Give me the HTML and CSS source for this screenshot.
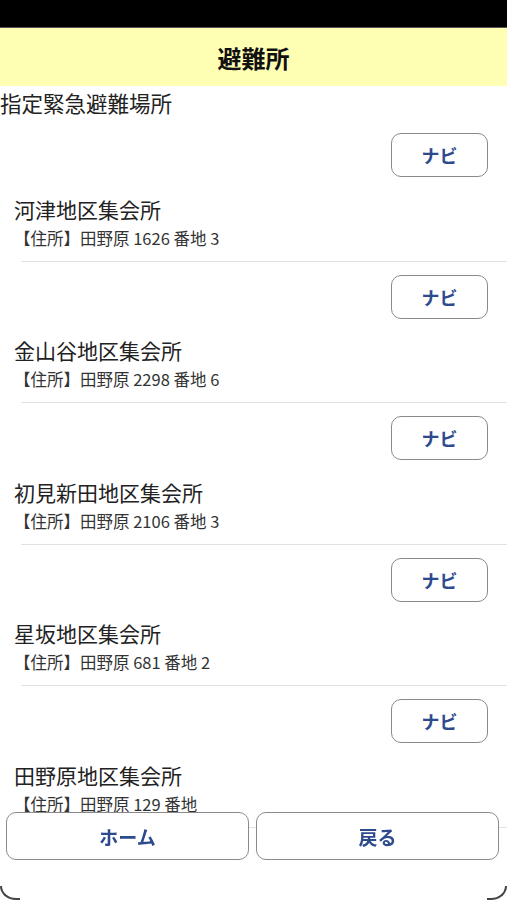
FILE: index.html
```html
<!DOCTYPE html>
<html lang="ja">
<head>
  <meta charset="UTF-8">
  <meta name="viewport" content="width=device-width, initial-scale=1.0">
  <title>避難所</title>
  <link rel="stylesheet" href="styles.css">
</head>
<body>
  <div class="status-bar"></div>

  <!-- Page title -->
  <header class="title-bar">
    <h1>避難所</h1>
  </header>

  <div class="section-label">指定緊急避難場所</div>

  <!-- Shelter list -->
  <ul class="shelter-list">
    <li class="shelter">
      <div class="nav-row"><button class="navi-button">ナビ</button></div>
      <div class="shelter-name">河津地区集会所</div>
      <div class="shelter-address">【住所】田野原 1626 番地 3</div>
    </li>
    <li class="shelter">
      <div class="nav-row"><button class="navi-button">ナビ</button></div>
      <div class="shelter-name">金山谷地区集会所</div>
      <div class="shelter-address">【住所】田野原 2298 番地 6</div>
    </li>
    <li class="shelter">
      <div class="nav-row"><button class="navi-button">ナビ</button></div>
      <div class="shelter-name">初見新田地区集会所</div>
      <div class="shelter-address">【住所】田野原 2106 番地 3</div>
    </li>
    <li class="shelter">
      <div class="nav-row"><button class="navi-button">ナビ</button></div>
      <div class="shelter-name">星坂地区集会所</div>
      <div class="shelter-address">【住所】田野原 681 番地 2</div>
    </li>
    <li class="shelter">
      <div class="nav-row"><button class="navi-button">ナビ</button></div>
      <div class="shelter-name">田野原地区集会所</div>
      <div class="shelter-address">【住所】田野原 129 番地</div>
    </li>
  </ul>

  <!-- Bottom buttons -->
  <footer class="footer">
    <button class="footer-button">ホーム</button>
    <button class="footer-button">戻る</button>
  </footer>

  <div class="corner corner-left"></div>
  <div class="corner corner-right"></div>
</body>
</html>
```

FILE: styles.css
```css
body {
  margin: 0;
  background-color: #ffffff;
  color: #222222;
  font-family: "Noto Sans CJK JP", "Noto Sans", sans-serif;
  overflow: hidden;
  height: 900px;
}

.status-bar {
  height: 27px;
  background-color: #000000;
  border-bottom: 1px solid #555555;
}

.title-bar {
  height: 58px;
  background-color: #ffffb4;
  display: flex;
  align-items: center;
  justify-content: center;
}

.title-bar h1 {
  margin: 0;
  font-size: 24px;
  font-weight: bold;
  color: #111111;
}

.section-label {
  height: 34px;
  line-height: 34px;
  font-size: 21.5px;
  color: #222222;
}

/* List of shelters */
.shelter-list {
  list-style: none;
  margin: 0;
  padding: 0;
}

.shelter {
  padding-top: 13px;
}

.shelter::after {
  content: "";
  display: block;
  height: 1px;
  margin-top: 13px;
  margin-left: 21px;
  background-color: #e2e2e2;
}

.nav-row {
  display: flex;
  justify-content: flex-end;
  padding-right: 19px;
}

.navi-button {
  width: 97px;
  height: 44px;
  background-color: #ffffff;
  border: 1.5px solid #8a8a8a;
  border-radius: 10px;
  color: #2d4a8c;
  font-family: inherit;
  font-size: 18px;
  font-weight: bold;
  padding: 0;
}

.shelter-name {
  margin-top: 17.5px;
  padding-left: 14px;
  font-size: 21px;
  line-height: 28px;
  color: #222222;
}

.shelter-address {
  margin-top: 5px;
  padding-left: 14px;
  font-size: 16.5px;
  line-height: 20px;
  color: #333333;
}

/* Fixed buttons at the bottom */
.footer {
  position: fixed;
  left: 0;
  right: 0;
  bottom: 40px;
  display: flex;
  gap: 7px;
  padding: 0 8px 0 6px;
}

.footer-button {
  flex: 1;
  height: 48px;
  background-color: #ffffff;
  border: 1.5px solid #8a8a8a;
  border-radius: 10px;
  color: #2d4a8c;
  font-family: inherit;
  font-size: 19px;
  font-weight: bold;
  padding: 0;
}

/* Rounded screen corners */
.corner {
  position: fixed;
  bottom: 0;
  width: 20px;
  height: 14px;
  border-bottom: 2px solid #444444;
  box-sizing: border-box;
}

.corner-left {
  left: 0;
  border-left: 2px solid #444444;
  border-bottom-left-radius: 16px 14px;
}

.corner-right {
  right: 0;
  border-right: 2px solid #444444;
  border-bottom-right-radius: 16px 14px;
}
```
